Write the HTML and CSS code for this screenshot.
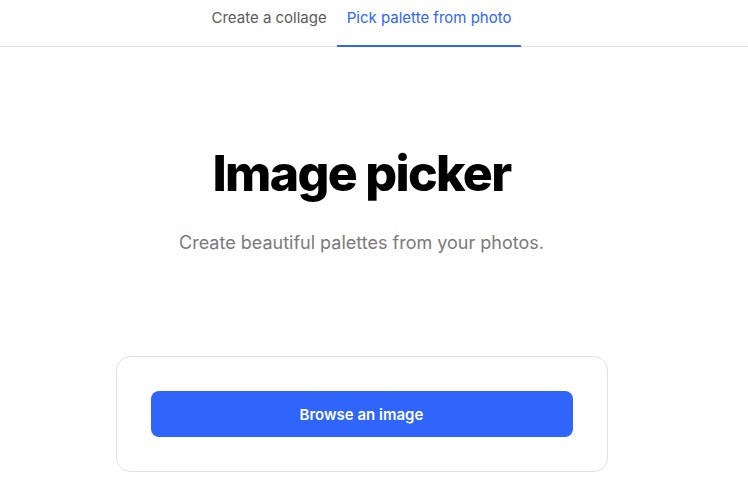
FILE: index.html
```html
<!DOCTYPE html>
<html lang="en">
<head>
<meta charset="utf-8">
<title>Image picker</title>
<link rel="stylesheet" href="styles.css">
</head>
<body>
<header class="topbar">
  <nav class="tabs">
    <a class="tab" href="#">Create a collage</a>
    <a class="tab tab-active" href="#">Pick palette from photo</a>
  </nav>
</header>
<main class="page">
  <h1 class="title">Image picker</h1>
  <p class="subtitle">Create beautiful palettes from your photos.</p>
  <section class="card">
    <button class="browse" type="button">Browse an image</button>
  </section>
</main>
</body>
</html>
```
FILE: styles.css
```css
* { box-sizing: border-box; }
html, body { margin: 0; padding: 0; background: #fff; }
body {
  font-family: Inter, "Noto Sans", "Liberation Sans", sans-serif;
  color: #111;
}
.topbar {
  border-bottom: 1px solid #e3e3e3;
  height: 47px;
}
.tabs {
  width: 723px;
  display: flex;
  justify-content: center;
}
.tab {
  display: block;
  padding: 8px 10px 17px;
  line-height: 20px;
  font-size: 15px;
  color: #5a5a5a;
  text-decoration: none;
  border-bottom: 2px solid transparent;
}
.tab-active {
  color: #2f65fb;
  border-bottom-color: #2f65fb;
}
.page {
  width: 723px;
  display: flex;
  flex-direction: column;
  align-items: center;
}
.title {
  margin: 101px 0 0;
  font-size: 50px;
  line-height: 50px;
  font-weight: 800;
  letter-spacing: -1.7px;
  color: #000;
}
.subtitle {
  margin: 33px 0 0;
  font-size: 18px;
  line-height: 24px;
  color: #7a7a7a;
}
.card {
  margin-top: 101px;
  width: 492px;
  padding: 34px;
  border: 1px solid #e2e2e2;
  border-radius: 14px;
}
.browse {
  display: block;
  width: 100%;
  height: 46px;
  border: none;
  border-radius: 8px;
  background: #2f65fb;
  color: #fff;
  font-family: inherit;
  font-size: 15px;
  font-weight: 600;
}
```
